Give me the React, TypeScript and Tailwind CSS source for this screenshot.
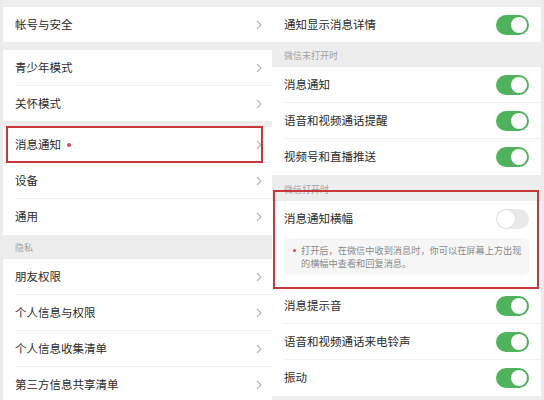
import React from 'react';

const font = { fontFamily: '"Noto Sans CJK SC", "Noto Sans", sans-serif' };

function Chevron() {
  return (
    <svg width="6" height="10" viewBox="0 0 6 10" className="shrink-0">
      <polyline points="1,1 5,5 1,9" fill="none" stroke="#b8b8b8" strokeWidth="1.2" />
    </svg>
  );
}

function Toggle({ on }: { on: boolean }) {
  return on ? (
    <div className="w-[33px] h-[20px] rounded-full bg-[#4fb25c] flex items-center justify-end px-[2px] shrink-0">
      <div className="w-[16px] h-[16px] rounded-full bg-white" />
    </div>
  ) : (
    <div className="w-[33px] h-[20px] rounded-full bg-[#e9e9e9] flex items-center justify-start px-[1px] shrink-0">
      <div className="w-[18px] h-[18px] rounded-full bg-white shadow-[0_0_2px_rgba(0,0,0,0.15)]" />
    </div>
  );
}

function NavRow({ label, h = 'h-[36px]', last = false, dot = false }: { label: string; h?: string; last?: boolean; dot?: boolean }) {
  return (
    <div className={`${h} bg-white pl-[12px] shrink-0`}>
      <div className={`h-full flex items-center pr-[10px] ${last ? '' : 'border-b border-[#efefef]'}`}>
        <span className="text-[11.5px] text-[#2b2b2b]">{label}</span>
        {dot && <span className="ml-[6px] w-[4px] h-[4px] rounded-full bg-[#df4a4e]" />}
        <span className="flex-1" />
        <Chevron />
      </div>
    </div>
  );
}

function SwitchRow({ label, on = true, h = 'h-[36px]', last = false }: { label: string; on?: boolean; h?: string; last?: boolean }) {
  return (
    <div className={`${h} bg-white pl-[12px] shrink-0`}>
      <div className={`h-full flex items-center pr-[12px] ${last ? '' : 'border-b border-[#efefef]'}`}>
        <span className="text-[11.5px] text-[#2b2b2b] flex-1">{label}</span>
        <Toggle on={on} />
      </div>
    </div>
  );
}

function Header({ label, h, pl }: { label: string; h: string; pl: string }) {
  return (
    <div className={`${h} bg-[#ededed] ${pl} flex items-end pb-[5px] shrink-0`}>
      <span className="text-[9px] text-[#a3a3a3]">{label}</span>
    </div>
  );
}

export default function App() {
  return (
    <div className="w-[544px] h-[400px] flex overflow-hidden bg-white" style={font}>
      {/* Left: settings list */}
      <div className="relative w-[272px] h-full flex flex-col overflow-hidden border-l-[3px] border-[#ececec]">
        <div className="h-[7px] bg-[#ededed] shrink-0" />
        <NavRow label="帐号与安全" h="h-[35px]" last />
        <div className="h-[8px] bg-[#ededed] shrink-0" />
        <NavRow label="青少年模式" />
        <NavRow label="关怀模式" h="h-[35px]" last />
        <div className="h-[6px] bg-[#ededed] shrink-0" />
        <NavRow label="消息通知" dot />
        <NavRow label="设备" />
        <NavRow label="通用" last />
        <Header label="隐私" h="h-[24px]" pl="pl-[12px]" />
        <NavRow label="朋友权限" />
        <NavRow label="个人信息与权限" />
        <NavRow label="个人信息收集清单" />
        <NavRow label="第三方信息共享清单" last />

        {/* highlight */}
        <div className="absolute left-[3px] top-[126px] w-[257px] h-[37px] border-2 border-[#c9373d]" />
      </div>

      {/* Right: notification settings */}
      <div className="relative w-[272px] h-full flex flex-col overflow-hidden border-r-[3px] border-[#ececec]">
        <div className="h-[7px] bg-[#ededed] shrink-0" />
        <SwitchRow label="通知显示消息详情" h="h-[35px]" last />
        <Header label="微信未打开时" h="h-[25px]" pl="pl-[12px]" />
        <SwitchRow label="消息通知" />
        <SwitchRow label="语音和视频通话提醒" />
        <SwitchRow label="视频号和直播推送" last />
        <Header label="微信打开时" h="h-[26px]" pl="pl-[12px]" />
        <div className="bg-white shrink-0 pb-[12px]">
          <SwitchRow label="消息通知横幅" on={false} h="h-[35px]" last />
          <div className="mx-[12px] mt-[2px] h-[37px] rounded-[5px] bg-[#f6f6f6] pl-[9px] flex items-center">
            <div className="flex gap-[5px]">
              <span className="mt-[5px] w-[3px] h-[3px] rounded-full bg-[#df4a4e] shrink-0" />
              <div className="text-[9.2px] leading-[12.5px] text-[#8a8a8a] whitespace-nowrap">
                <div>打开后，在微信中收到消息时，你可以在屏幕上方出现</div>
                <div>的横幅中查看和回复消息。</div>
              </div>
            </div>
          </div>
        </div>
        <div className="h-[1px] bg-white shrink-0" />
        <SwitchRow label="消息提示音" />
        <SwitchRow label="语音和视频通话来电铃声" />
        <SwitchRow label="振动" last />
        <div className="flex-1 bg-[#ededed]" />

        {/* highlight */}
        <div className="absolute left-[1px] top-[190px] w-[266px] h-[99px] border-2 border-[#c9373d]" />
      </div>
    </div>
  );
}
